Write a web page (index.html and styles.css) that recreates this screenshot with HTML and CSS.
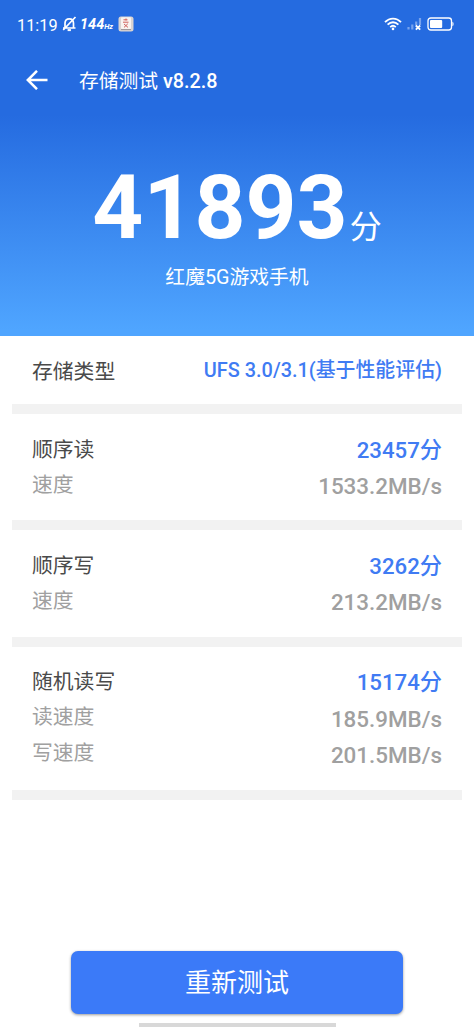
FILE: index.html
```html
<!DOCTYPE html>
<html lang="zh-CN">
<head>
<meta charset="utf-8">
<meta name="viewport" content="width=device-width, initial-scale=1">
<title>存储测试</title>
<link rel="stylesheet" href="styles.css">
</head>
<body>
<div class="screen">
  <header class="hero">
    <div class="status">
      <div class="status-left">
        <span class="clock">11:19</span>
        <svg class="bell" width="15" height="16" viewBox="0 0 15 16" fill="none" stroke="#fff" stroke-width="1.7">
          <path d="M3 11.5V7.2C3 4.4 4.8 2.8 7.2 2.8s4.3 1.6 4.3 4.4v4.3M1 12h12.5M13.5 1L1.2 14"/>
          <path d="M5.6 14.1h3.3" stroke-width="2"/>
        </svg>
        <span class="rate">144<small>Hz</small></span>
        <svg class="app" width="16" height="16" viewBox="0 0 16 16">
          <rect x=".5" y=".5" width="15" height="15" rx="2.5" fill="#d9d3d2"/>
          <rect x="3" y="1.3" width="10" height="11.7" rx="1" fill="#f8f3ef"/>
          <path d="M5.5 3.8h4M8 2.5v2M5 6.2h5.5M6 8l4 3.4M9.8 7.8L6 11.4" stroke="#d0605c" fill="none"/>
          <path d="M3 13.6h10" stroke="#9b9395"/>
        </svg>
      </div>
      <div class="status-right">
        <svg width="18" height="14" viewBox="0 0 18 14" fill="none" stroke="#fff" stroke-width="1.8">
          <path d="M1 5.2C5.6.3 12.4.3 17 5.2M3.6 7.7c3.3-3.3 7.5-3.3 10.8 0M6.2 10.1c1.7-1.6 3.9-1.6 5.6 0"/>
          <circle cx="9" cy="11.9" r="1.3" fill="#fff" stroke="none"/>
        </svg>
        <svg width="15" height="14" viewBox="0 0 15 14">
          <path d="M1.5 10v2.5M5.3 7.5v5M9.2 4.5v4M13 1v7" stroke="#78a3ed" stroke-width="2.2" fill="none"/>
          <path d="M8.8 8.5l4.4 4.2M13.2 8.5l-4.4 4.2" stroke="#fff" stroke-width="1.8"/>
        </svg>
        <svg width="27" height="14" viewBox="0 0 27 14">
          <rect x="1" y="1" width="23.5" height="12" rx="2.8" fill="none" stroke="#fff" stroke-width="1.3"/>
          <rect x="3" y="3" width="12.2" height="8" rx="1" fill="#fff"/>
          <path d="M25.4 4.8q1.2.4 1.2 2.2t-1.2 2.2z" fill="#fff"/>
        </svg>
      </div>
    </div>
    <div class="appbar">
      <svg width="22" height="20" viewBox="0 0 22 20" fill="none" stroke="#fff" stroke-width="2.5">
        <path d="M21.5 10H2M11 .8L1.8 10l9.2 9.2"/>
      </svg>
      <h1 class="title">存储测试 <span class="version">v8.2.8</span></h1>
    </div>
    <div class="score"><strong class="score-num">41893</strong><span class="score-unit">分</span></div>
    <div class="device">红魔5G游戏手机</div>
  </header>

  <main class="results">
    <section class="group type">
      <div class="labels"><span class="name">存储类型</span></div>
      <div class="values"><span class="kind">UFS 3.0/3.1(基于性能评估)</span></div>
    </section>
    <section class="group">
      <div class="labels"><span class="name">顺序读</span><span>速度</span></div>
      <div class="values"><span class="points">23457分</span><span>1533.2MB/s</span></div>
    </section>
    <section class="group">
      <div class="labels"><span class="name">顺序写</span><span>速度</span></div>
      <div class="values"><span class="points">3262分</span><span>213.2MB/s</span></div>
    </section>
    <section class="group random">
      <div class="labels"><span class="name">随机读写</span><span>读速度</span><span>写速度</span></div>
      <div class="values"><span class="points">15174分</span><span>185.9MB/s</span><span>201.5MB/s</span></div>
    </section>
  </main>

  <footer class="footer">
    <button class="retest">重新测试</button>
    <div class="handle"></div>
  </footer>
</div>
</body>
</html>
```
FILE: styles.css
```css
* { box-sizing: border-box; }
body { margin: 0; background: #fff; font-family: Roboto, "Noto Sans CJK SC", sans-serif; }
.screen { height: 1027px; display: flex; flex-direction: column; overflow: hidden; }
.hero {
  height: 336px; flex: none; color: #fff;
  display: flex; flex-direction: column;
  background: linear-gradient(#256be0 0, #256be0 115px, #4fa5ff 330px);
}
.status { height: 48px; padding: 0 20px 0 17px; display: flex; justify-content: space-between; align-items: center; }
.status-left, .status-right { display: flex; align-items: center; }
.status svg { display: block; }
.status-right { gap: 5px; }
.clock { font-size: 16.3px; line-height: 20px; padding-top: 3px; width: 45px; white-space: nowrap; }
.rate { font-size: 14.5px; font-weight: 700; font-style: italic; line-height: 16px; padding-top: 3px; margin-left: 3px; width: 38px; white-space: nowrap; }
.rate small { font-size: 7.5px; }
.appbar { height: 64px; padding-left: 26px; display: flex; align-items: center; gap: 31px; }
.title { margin: 0; padding-top: 3px; font-size: 19.8px; font-weight: 400; line-height: 28px; }
.version { font-weight: 500; }
.score { height: 152px; display: flex; justify-content: center; align-items: baseline; gap: 2px; padding-top: 43px; line-height: 105px; }
.score-num { font-size: 89px; font-weight: 700; }
.score-unit { font-size: 32px; font-weight: 400; }
.device { font-size: 19.8px; line-height: 28px; text-align: center; }
.results { padding: 0 12px; }
.group {
  height: 116.4px; padding: 17.5px 20px 0; border-bottom: 10.4px solid #f2f2f2;
  display: flex; justify-content: space-between;
}
.type { height: 78px; }
.random { height: 152.8px; }
.labels, .values { display: flex; flex-direction: column; white-space: nowrap; }
.labels { padding-top: 1px; font-size: 20.8px; font-weight: 400; line-height: 35.2px; color: #a0a0a0; }
.name { color: #4a4a4a; }
.values { font-size: 22.4px; font-weight: 500; line-height: 36.4px; color: #a0a0a0; text-align: right; }
.points { color: #407bf3; font-size: 22.2px; }
.kind { color: #407bf3; font-size: 19.9px; line-height: 33px; }
.footer { margin-top: auto; display: flex; flex-direction: column; align-items: center; gap: 9px; }
.retest {
  width: 332px; height: 63px; border: 0; border-radius: 7px; padding: 2px 0 0;
  color: #fff; background: #3b7af8; font: 400 26px/61px Roboto, "Noto Sans CJK SC", sans-serif;
  box-shadow: 0 1px 3px rgba(0, 0, 0, .4);
}
.handle { width: 197px; height: 4px; background: #d8d8d8; }
```
